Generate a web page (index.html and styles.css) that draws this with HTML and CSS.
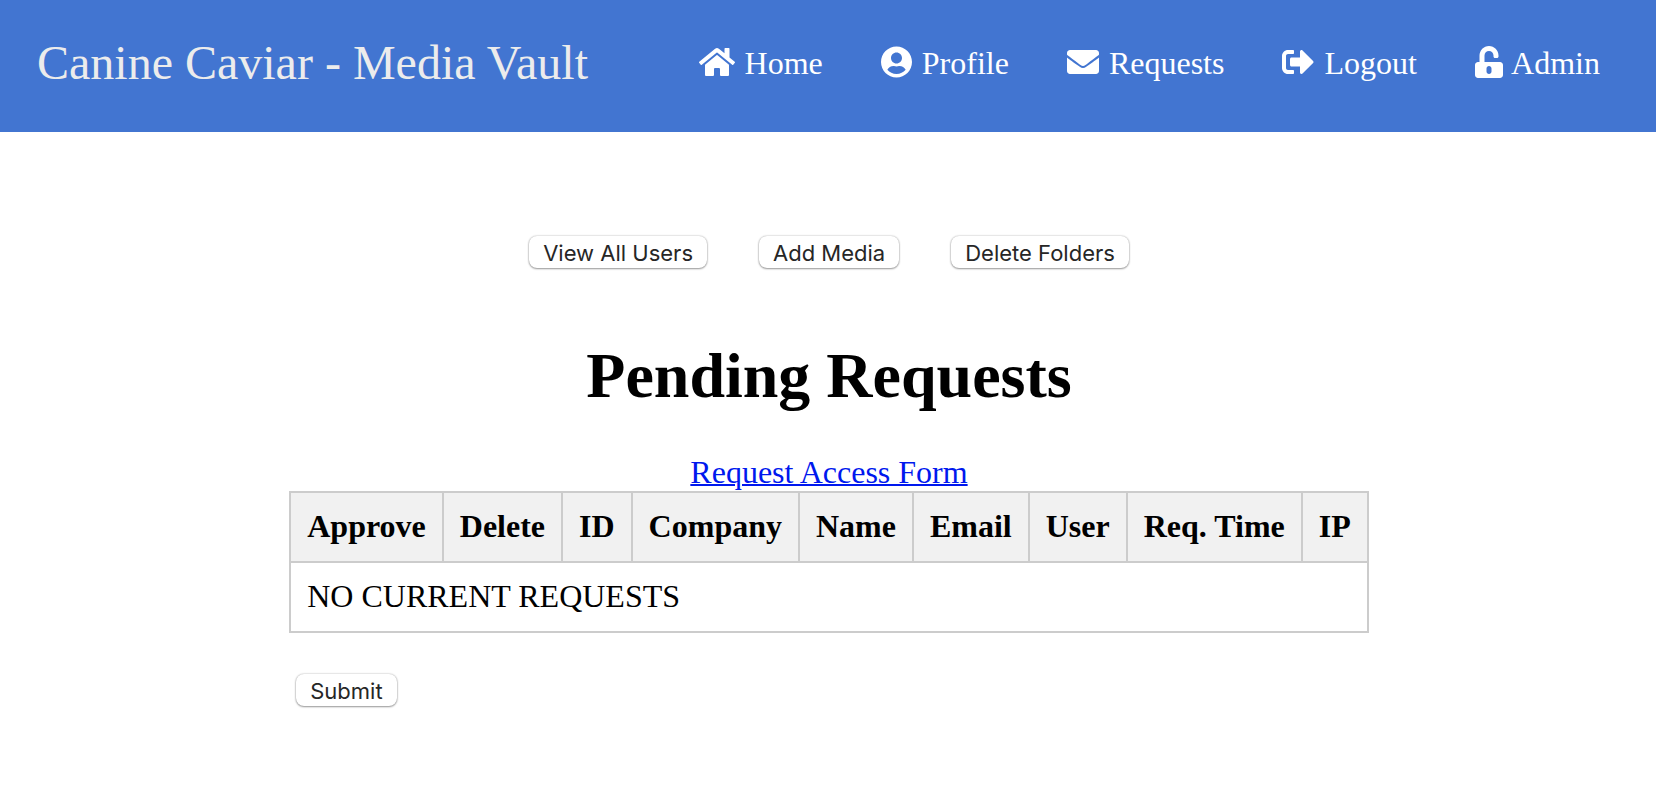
FILE: index.html
```html
<!DOCTYPE html>
<html lang="en">
<head>
<meta charset="utf-8">
<title>Canine Caviar - Media Vault</title>
<link rel="stylesheet" href="styles.css">
</head>
<body>
<header class="topbar">
  <a class="brand" href="#">Canine Caviar - Media Vault</a>
  <nav class="nav">
    <a class="nav-link" href="#"><svg class="icon" viewBox="0 0 576 512" width="36" height="32" aria-hidden="true"><path d="M280.37 148.26L96 300.11V464a16 16 0 0 0 16 16l112.06-.29a16 16 0 0 0 15.92-16V368a16 16 0 0 1 16-16h64a16 16 0 0 1 16 16v95.64a16 16 0 0 0 16 16.05L464 480a16 16 0 0 0 16-16V300L295.67 148.26a12.19 12.19 0 0 0-15.3 0zM571.6 251.47L488 182.56V44.05a12 12 0 0 0-12-12h-56a12 12 0 0 0-12 12v72.61L318.47 43a48 48 0 0 0-61 0L4.34 251.47a12 12 0 0 0-1.6 16.9l25.5 31A12 12 0 0 0 45.15 301l235.22-193.74a12.19 12.19 0 0 1 15.3 0L530.9 301a12 12 0 0 0 16.9-1.6l25.5-31a12 12 0 0 0-1.7-16.93z"/></svg> Home</a>
    <a class="nav-link" href="#"><svg class="icon" viewBox="0 0 496 512" width="31" height="32" aria-hidden="true"><path d="M248 8C111 8 0 119 0 256s111 248 248 248 248-111 248-248S385 8 248 8zm0 96c48.6 0 88 39.4 88 88s-39.4 88-88 88-88-39.4-88-88 39.4-88 88-88zm0 344c-58.7 0-111.3-26.6-146.5-68.2 18.8-35.4 55.6-59.8 98.5-59.8 2.4 0 4.8.4 7.1 1.1 13 4.2 26.6 6.9 40.9 6.9 14.3 0 28-2.7 40.9-6.9 2.3-.7 4.7-1.1 7.1-1.1 42.9 0 79.7 24.4 98.5 59.8C359.3 421.4 306.7 448 248 448z"/></svg> Profile</a>
    <a class="nav-link" href="#"><svg class="icon" viewBox="0 0 512 512" width="32" height="32" aria-hidden="true"><path d="M502.3 190.8c3.9-3.1 9.7-.2 9.7 4.7V400c0 26.5-21.5 48-48 48H48c-26.5 0-48-21.5-48-48V195.6c0-5 5.7-7.8 9.7-4.7 22.4 17.4 52.1 39.5 154.1 113.6 21.1 15.4 56.7 47.8 92.2 47.6 35.7.3 72-32.8 92.3-47.6 102-74.1 131.6-96.3 154-113.7zM256 320c23.2.4 56.6-29.2 73.4-41.4 132.7-96.3 142.8-104.7 173.4-128.7 5.8-4.5 9.2-11.5 9.2-18.9v-19c0-26.5-21.5-48-48-48H48c-26.5 0-48 21.5-48 48v19c0 7.4 3.4 14.3 9.2 18.9 30.6 23.9 40.7 32.4 173.4 128.7 16.8 12.2 50.2 41.8 73.4 41.4z"/></svg> Requests</a>
    <a class="nav-link" href="#"><svg class="icon" viewBox="0 0 512 512" width="32" height="32" aria-hidden="true"><path d="M497 273L329 441c-15 15-41 4.500-41-17v-96H152c-13.300 0-24-10.700-24-24v-96c0-13.300 10.700-24 24-24h136V88c0-21.400 25.900-32 41-17l168 168c9.300 9.400 9.300 24.600 0 34zM192 436v-40c0-6.600-5.400-12-12-12H96c-17.700 0-32-14.300-32-32V160c0-17.700 14.300-32 32-32h84c6.600 0 12-5.400 12-12V76c0-6.600-5.400-12-12-12H96c-53 0-96 43-96 96v192c0 53 43 96 96 96h84c6.600 0 12-5.400 12-12z"/></svg> Logout</a>
    <a class="nav-link" href="#"><svg class="icon" viewBox="0 0 448 512" width="28" height="32" aria-hidden="true"><path d="M400 256H152V152.900c0-39.600 31.700-72.500 71.300-72.900 40-.4 72.700 32.100 72.700 72v16c0 13.300 10.700 24 24 24h32c13.300 0 24-10.700 24-24v-16C376 68 307.500-.3 223.500 0 139.500.3 72 69.500 72 153.500V256H48c-26.500 0-48 21.500-48 48v160c0 26.500 21.500 48 48 48h352c26.500 0 48-21.500 48-48V304c0-26.500-21.500-48-48-48zM264 408c0 22.100-17.900 40-40 40s-40-17.900-40-40v-48c0-22.100 17.900-40 40-40s40 17.900 40 40v48z"/></svg> Admin</a>
  </nav>
</header>
<main class="content">
  <div class="actions">
    <button class="btn" type="button">View All Users</button>
    <button class="btn" type="button">Add Media</button>
    <button class="btn" type="button">Delete Folders</button>
  </div>
  <h1 class="title">Pending Requests</h1>
  <a class="form-link" href="#">Request Access Form</a>
  <form class="requests">
    <table class="table">
      <thead>
        <tr><th>Approve</th><th>Delete</th><th>ID</th><th>Company</th><th>Name</th><th>Email</th><th>User</th><th>Req. Time</th><th>IP</th></tr>
      </thead>
      <tbody>
        <tr><td colspan="9">NO CURRENT REQUESTS</td></tr>
      </tbody>
    </table>
    <button class="btn submit" type="submit">Submit</button>
  </form>
</main>
</body>
</html>
```
FILE: styles.css
```css
body {
  margin: 0;
  background: #fff;
  color: #000;
  font-family: "Liberation Serif", "Times New Roman", serif;
  font-size: 32px;
  line-height: 36px;
}

.topbar {
  display: flex;
  justify-content: space-between;
  align-items: center;
  box-sizing: border-box;
  min-height: 132px;
  padding: 0 56px 6px 37px;
  background: #4275d1;
}

.brand {
  color: #ececec;
  font-size: 48px;
  line-height: 56px;
  text-decoration: none;
}

.nav {
  display: flex;
  gap: 58px;
}

.nav-link {
  color: #fff;
  text-decoration: none;
  white-space: nowrap;
}

.icon {
  margin-right: 2px;
  fill: currentColor;
  vertical-align: -4px;
}

.content {
  display: flex;
  flex-direction: column;
  align-items: center;
  padding: 104px 16px 16px 18px;
}

.actions {
  display: flex;
  gap: 52px;
}

.btn {
  height: 32px;
  padding: 3px 14px 0;
  border: 0;
  border-radius: 8px;
  background: #fff;
  box-shadow: 0 0 2px rgba(0, 0, 0, 0.3), 0 1px 2px rgba(0, 0, 0, 0.35);
  color: #262626;
  font-family: Inter, "Open Sans", sans-serif;
  font-size: 22px;
  line-height: 29px;
}

.title {
  margin: 72px 0 42px;
  font-size: 64px;
  line-height: 72px;
}

.form-link {
  margin-bottom: 1px;
  color: #0018ee;
  text-decoration-thickness: 2px;
}

.table {
  border-collapse: collapse;
}

.table th,
.table td {
  padding: 15px 16px 17px;
  border: 2px solid #ccc;
  text-align: left;
}

.table th {
  background: #f1f1f1;
}

.submit {
  display: block;
  margin: 41px 0 0 7px;
}
```
